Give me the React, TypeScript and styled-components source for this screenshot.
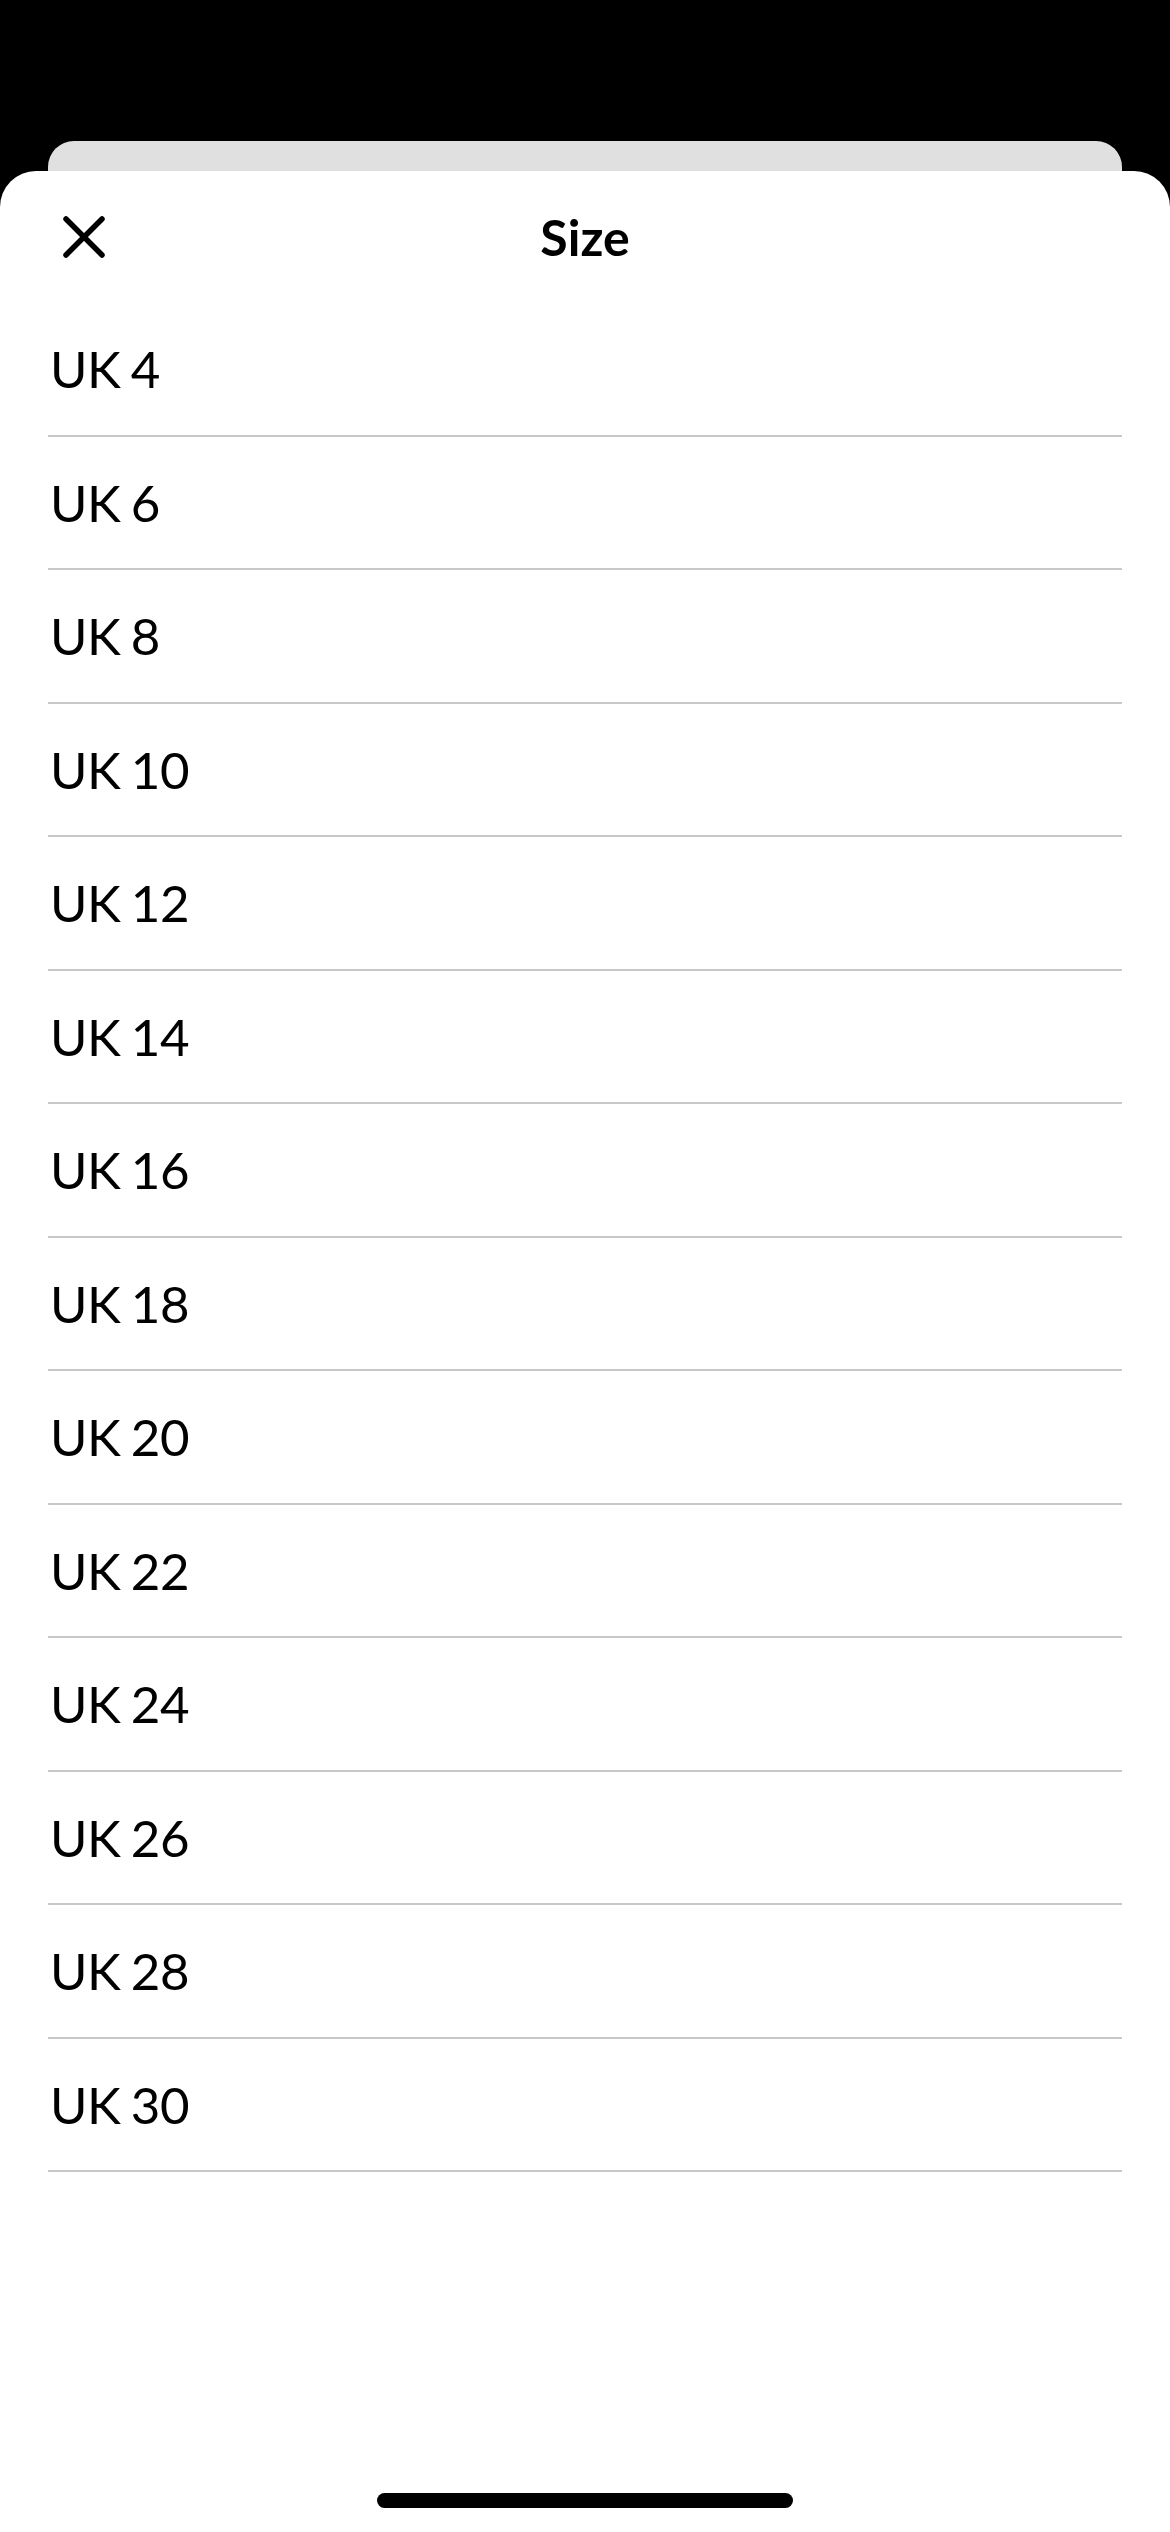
import styled, { createGlobalStyle } from "styled-components";

const sizes = [4, 6, 8, 10, 12, 14, 16, 18, 20, 22, 24, 26, 28, 30];

const GlobalStyle = createGlobalStyle`
  html, body {
    margin: 0;
    padding: 0;
    background: #000;
  }
  * {
    box-sizing: border-box;
  }
`;

function CloseIcon() {
  return (
    <svg width="42" height="42" viewBox="0 0 42 42" fill="none">
      <path
        d="M3 3L39 39M39 3L3 39"
        stroke="#000"
        strokeWidth="5.5"
        strokeLinecap="round"
      />
    </svg>
  );
}

function App() {
  return (
    <Page>
      <GlobalStyle />
      <BehindCard />
      <Sheet>
        <Header>
          <CloseButton aria-label="Close">
            <CloseIcon />
          </CloseButton>
          <Title>Size</Title>
        </Header>
        <List>
          {sizes.map((s) => (
            <Row key={s}>UK {s}</Row>
          ))}
        </List>
        <HomeIndicator />
      </Sheet>
    </Page>
  );
}

export default App;

const Page = styled.div`
  width: 1170px;
  height: 2532px;
  background: #000;
  padding-top: 141px;
  display: flex;
  flex-direction: column;
  overflow: hidden;
  font-family: "Lato", "Noto Sans", sans-serif;
`;

const BehindCard = styled.div`
  height: 30px;
  margin: 0 48px;
  background: #e0e0e0;
  border-radius: 26px 26px 0 0;
`;

const Sheet = styled.div`
  flex: 1;
  background: #fff;
  border-radius: 36px 36px 0 0;
  display: flex;
  flex-direction: column;
`;

const Header = styled.div`
  height: 132px;
  display: grid;
  grid-template-columns: 1fr auto 1fr;
  align-items: center;
  padding: 0 63px;
`;

const CloseButton = styled.button`
  justify-self: start;
  width: 42px;
  height: 42px;
  padding: 0;
  border: none;
  background: none;
  display: flex;
`;

const Title = styled.h1`
  margin: 0;
  font-size: 50px;
  font-weight: 700;
  color: #000;
`;

const List = styled.div`
  padding: 0 48px;
  display: flex;
  flex-direction: column;
`;

const Row = styled.div`
  height: 133.5px;
  display: flex;
  align-items: center;
  padding-left: 2px;
  border-bottom: 2px solid #c8c8c8;
  font-size: 51px;
  font-weight: 400;
  letter-spacing: -0.5px;
  word-spacing: -2px;
  color: #000;
`;

const HomeIndicator = styled.div`
  margin: auto auto 24px;
  width: 416px;
  height: 15px;
  border-radius: 8px;
  background: #000;
`;
